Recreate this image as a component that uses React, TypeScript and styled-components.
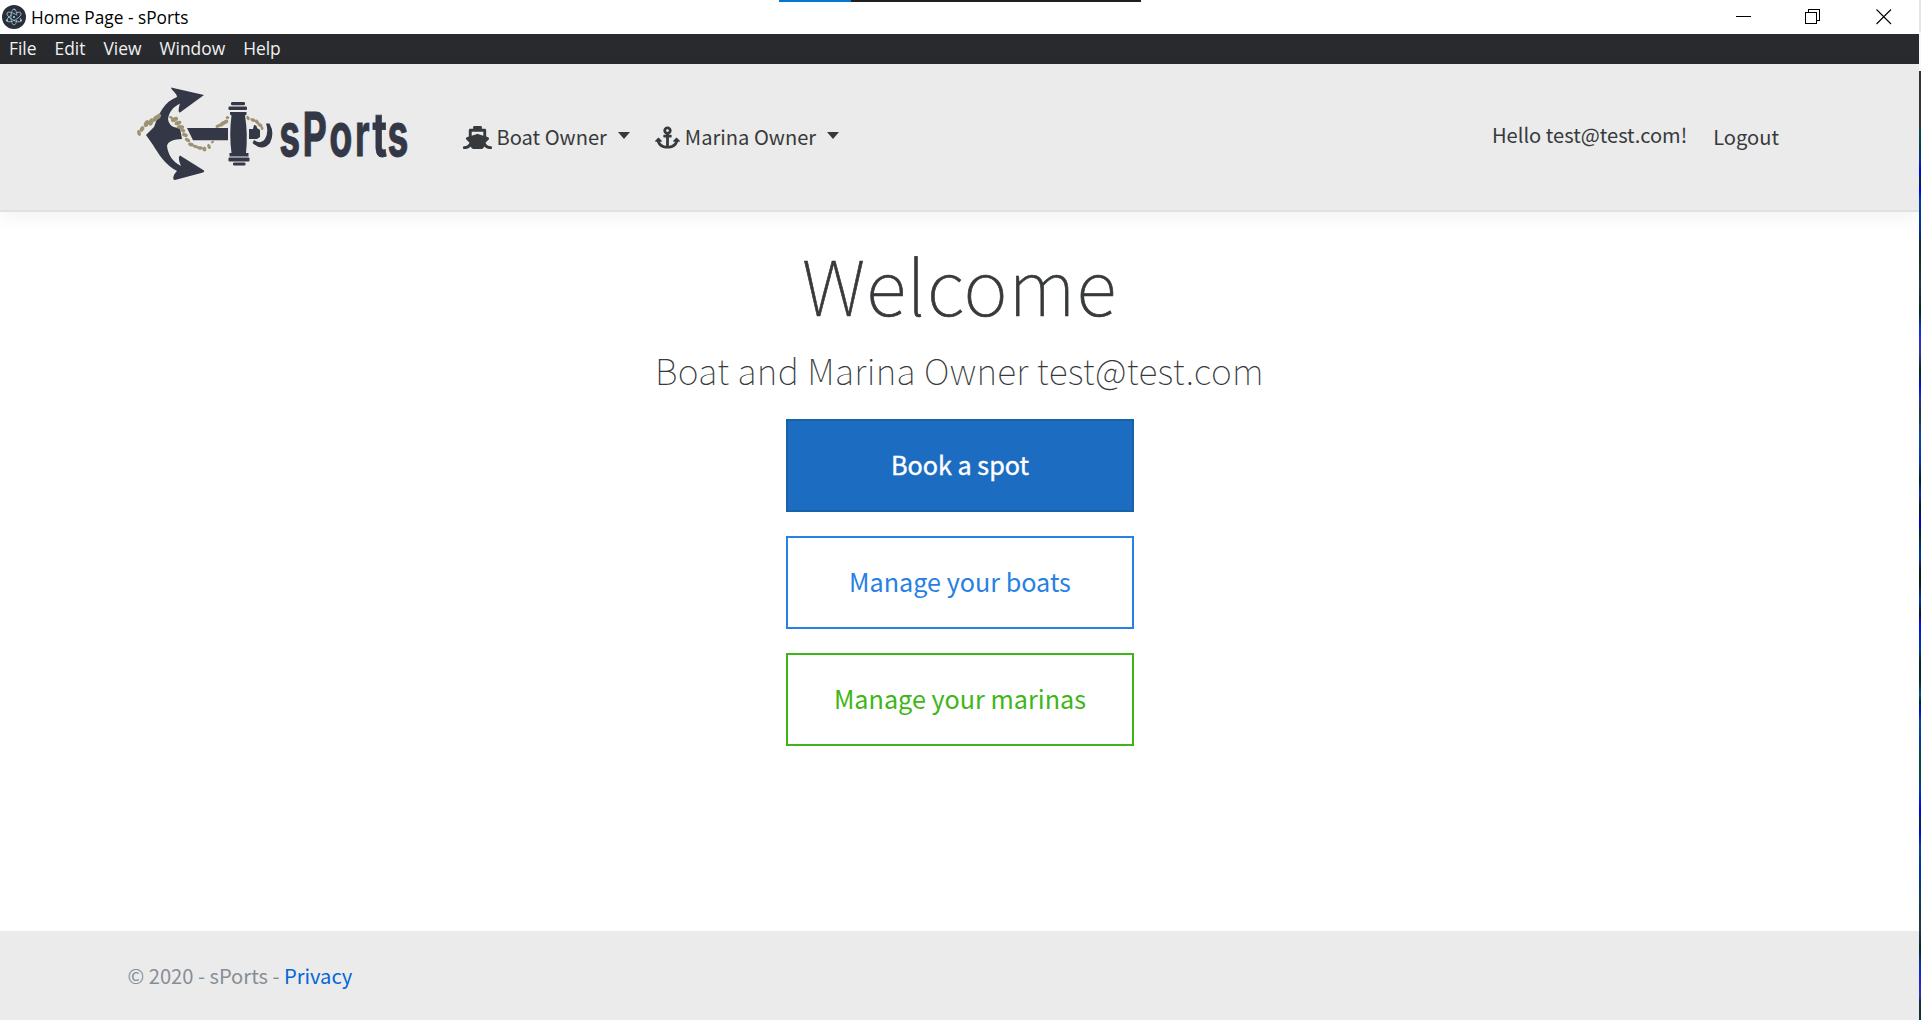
import React from "react";
import styled, { createGlobalStyle } from "styled-components";
import { FaShip, FaAnchor } from "react-icons/fa";

const sans = '"Noto Sans CJK JP", "Noto Sans", sans-serif';

const Global = createGlobalStyle`
  * { box-sizing: border-box; }
  body { margin: 0; background: #fff; color: #373a3c; font-family: ${sans}; overflow: hidden; }
`;
const Desktop = styled.div`
  display: grid;
  grid-template-columns: 1fr 2px;
  height: 1020px;
  width: 1921px;
`;
const DesktopEdge = styled.div`
  background: linear-gradient(#e6e6e6 0 32px, #f8f8f8 32px 71px, #30343c 71px 126px, #054a52 130px, #04404c 146px, #0030a8 160px, #0000f0 173px, #003038 180px, #0000f0 190px, #0040a0 202px, #0030a0 232px, #062c30 246px, #1a3030 264px, #1a3a60 286px, #042828 312px, #0038c0 326px, #2a2ae0 338px, #2838a0 354px, #082828 370px, #0010e0 386px, #2030b0 398px, #203838 414px, #1048a0 434px, #0038b0 462px, #042020 480px, #0030c0 494px, #042020 506px, #0000e0 523px, #042828 535px, #0038b0 555px, #041c20 572px, #041c20 582px, #0038b0 600px, #041c20 613px, #0010f0 623px, #0038a0 650px, #042828 662px, #042828 680px, #005090 695px, #042828 702px, #0010f0 712px, #005088 722px, #0038b0 740px, #044850 755px, #044850 775px, #0038b0 790px, #0000f0 812px, #003040 822px, #0000f0 832px, #004890 848px, #0030b0 870px, #0a4060 900px, #1a3838 915px, #1a3a60 928px, #042828 950px, #0038b0 965px, #2020e0 976px, #2038b0 996px, #12303c 1002px);
`;
const Window = styled.div`
  display: flex;
  flex-direction: column;
  min-width: 0;
`;
const TitleBar = styled.header`
  position: relative;
  display: flex;
  align-items: center;
  height: 34px;
  padding-left: 2px;
  background: #fff;
  color: #000;
`;
const TitleText = styled.span`
  margin-left: 5px;
  padding-top: 2px;
  flex: 1;
  font: 400 17.3px/32px "Open Sans", sans-serif;
`;
const LoadStrip = styled.div`
  position: absolute;
  left: 779px;
  top: 0;
  width: 362px;
  height: 2px;
  background: linear-gradient(90deg, #0078d7 72px, #1f1f1f 72px);
`;
const WindowControls = styled.div`
  display: flex;
  gap: 54px;
  padding-right: 27px;
`;
const MenuBar = styled.nav`
  display: flex;
  height: 30px;
  padding-left: 9px;
  gap: 18px;
  background: #292a2d;
  color: #f1f1f1;
  font: 400 17.4px/29px "Open Sans", sans-serif;
`;
const NavBar = styled.nav`
  display: flex;
  align-items: center;
  height: 148px;
  flex: none;
  padding: 0 140px 0 120px;
  background: #ebebeb;
  border-bottom: 2px solid #dee2e6;
  box-shadow: 0 6px 18px rgba(0, 0, 0, 0.05);
  font-size: 20.1px;
  line-height: 30px;
`;
const NavItem = styled.a<{ $gap: number }>`
  display: flex;
  align-items: center;
  margin-left: ${(p) => p.$gap}px;
  white-space: nowrap;
`;
const NavLabel = styled.span`
  margin-left: 4.5px;
`;
const Caret = styled.i`
  margin: -4px 0 0 11px;
  border: 6.5px solid transparent;
  border-top: 7px solid #373a3c;
  border-bottom: 0;
`;
const Account = styled.div`
  display: flex;
  gap: 26px;
  margin-left: auto;
`;
const Greeting = styled.span`
  margin-top: -2px;
`;
const Main = styled.main`
  flex: 1;
  display: flex;
  flex-direction: column;
  align-items: center;
  padding-top: 21px;
`;
const Heading = styled.h1`
  margin: 0;
  font-size: 75.2px;
  font-weight: 100;
  line-height: 101px;
  letter-spacing: 1px;
  -webkit-text-stroke: 0.7px #373a3c;
`;
const SubHeading = styled.h2`
  margin: 11px 0 24px;
  font-size: 35.5px;
  font-weight: 100;
  line-height: 50px;
  letter-spacing: 0.32px;
`;
const Actions = styled.div`
  display: flex;
  flex-direction: column;
  gap: 24px;
`;
const Action = styled.button<{ $text: string; $line: string; $fill?: string }>`
  width: 348px;
  height: 93px;
  padding: 0 0 4px 1px;
  border: 2px solid ${(p) => p.$line};
  background: ${(p) => p.$fill ?? "#fff"};
  color: ${(p) => p.$text};
  font: 400 25.2px/38px ${sans};
  -webkit-text-stroke: ${(p) => (p.$fill ? "0.4px" : "0")} ${(p) => p.$text};
`;
const Footer = styled.footer`
  height: 89px;
  padding-left: 127.5px;
  background: #ebebeb;
  color: #868e96;
  font-size: 20.15px;
  line-height: 90px;
`;
const PrivacyLink = styled.a`
  color: #0366d6;
`;
const LogoArt = styled.svg`
  flex: none;
  margin-top: 4px;
`;

const ElectronIcon = () => (
  <svg width="24" height="24" viewBox="0 0 24 24">
    <circle cx="12" cy="12" r="12" fill="#2b2e3a" />
    <g fill="none" stroke="#a9dbe4" strokeWidth="0.85" opacity="0.85">
      <ellipse cx="12" cy="12" rx="8" ry="3.1" transform="rotate(30 12 12)" strokeDasharray="29 4" />
      <ellipse cx="12" cy="12" rx="8" ry="3.1" transform="rotate(-30 12 12)" strokeDasharray="27 5" />
      <ellipse cx="12" cy="12" rx="8" ry="3.1" transform="rotate(90 12 12)" strokeDasharray="25 5" />
    </g>
    <g fill="#a9dbe4">
      <circle cx="12" cy="12" r="1" />
      <circle cx="5" cy="15.5" r="1" />
      <circle cx="19" cy="15.5" r="1" />
      <circle cx="12.5" cy="4.5" r="0.8" />
    </g>
  </svg>
);

/* Rope beads: x, y, half length, half width, rotation */
const beads = [
  [19, 64, 3, 1.8, 75], [22, 60, 3, 2, -60], [26.5, 54.5, 3.7, 2.4, -65], [31, 53, 3.7, 2.4, -70], [35.5, 49.5, 3.5, 2.3, -50], [38.5, 47.5, 3.2, 2.2, -60],
  [51, 48.5, 2, 1.2, 20], [54.5, 50.5, 3.8, 2.2, -25], [58, 54, 3.5, 2, -20], [60.5, 58, 3.6, 2, 0], [63, 61.5, 2.4, 1.8, 40], [65, 66, 3, 1.9, 20],
  [67.5, 71, 3, 1.8, 30], [71, 75.5, 3, 1.8, 20], [75.5, 77.5, 2.7, 1.6, 10], [80, 79, 3, 1.7, 10], [84.5, 80, 2.6, 1.9, 90], [89, 77.5, 2.6, 1.7, 70], [92.5, 73, 1.7, 1.2, -45],
  [98, 57, 2.6, 1.7, -20], [102, 55, 3.3, 2, -40], [105.5, 53, 3.2, 1.9, -30], [107.5, 48.5, 1.7, 1.5, 0],
  [128, 49, 2.4, 1.5, 60], [133, 51, 2.7, 1.7, 30], [137, 53, 2.7, 1.7, 50], [140, 56, 2.6, 1.7, 30], [142, 59, 2, 1.4, 70],
];
const wordmark: [string, number, number][] = [
  ["s", 159.3, 0.62], ["P", 182.5, 0.63], ["o", 209.2, 0.63], ["r", 235, 0.6], ["t", 252.5, 0.66], ["s", 267.5, 0.62],
];

const Logo = () => (
  <LogoArt width="300" height="140" viewBox="0 0 300 140">
    <g fill="#343746">
      <path d="M51 18.5 L84 26 L60 43.5 C58 44 58.5 39 60 34.5 C53 38 49 43 48 50 C49 57 54 59 60 59 L62 70 C54 70.5 48 72 47 77 C48 86 53 93 61 97 C59 92 58 88 60 86.5 L84 101.5 C84.5 102 84 103 83 103.5 L55 111 C52 111 53 106 57 102 C45 96 38 84 33 76 L26 66 L34 58 C39 44 44 33 57 28 C57 24 51 21 51 18.5 Z" />
      <path d="M67 59 H108 V71.3 H73 Z" />
      <rect x="111" y="33" width="14" height="3.3" rx="1.3" />
      <rect x="108.5" y="37.5" width="18.5" height="3.5" rx="1" />
      <path d="M110 43 H126.5 V45.5 L125 46.5 Q128 65 126 84 H128.5 V87.5 H109.5 V84 H111.5 Q109 65 111.5 46.5 L110 45.5 Z" />
      <rect x="108.5" y="88.5" width="21" height="4" rx="1" />
      <rect x="113" y="93.5" width="12.5" height="3" rx="1.2" />
      <path d="M129 60 L133 60 L134 56 Q137 56 137 59 L140 61 V68 L137 70 H129 Z" />
      <path d="M146 54.5 H149.5 Q155 64 150 74 Q142 83 132.500 74 L134 71 Q141 76 145 70 Q149 63 146 54.5 Z" />
    </g>
    <g fill="#9d9272">
      {beads.map(([x, y, rx, ry, r], i) => (
        <ellipse key={i} cx={x} cy={y} rx={rx} ry={ry} transform={`rotate(${r} ${x} ${y})`} />
      ))}
    </g>
    <g fill="#343746" stroke="#343746" strokeWidth="0.8" fontFamily="Inter, sans-serif" fontWeight="700" fontSize="60">
      {wordmark.map(([letter, x, stretch], i) => (
        <text key={i} transform={`translate(${x} 86.5) scale(${stretch} 1)`}>{letter}</text>
      ))}
    </g>
  </LogoArt>
);

export default function App() {
  return (
    <Desktop>
      <Global />
      <Window>
        <TitleBar>
          <ElectronIcon />
          <TitleText>Home Page - sPorts</TitleText>
          <LoadStrip />
          <WindowControls>
            <svg width="16" height="16" shapeRendering="crispEdges"><path d="M1 7.5H16" stroke="#000" /></svg>
            <svg width="17" height="16" shapeRendering="crispEdges"><path d="M.5 3.5H11.5V14.5H.5ZM3.5 3.5V.5H14.5V11.5H11.5" fill="none" stroke="#000" /></svg>
            <svg width="16" height="16"><path d="M.5 .5L15 15M15 .5L.5 15" stroke="#000" strokeWidth="1.1" /></svg>
          </WindowControls>
        </TitleBar>
        <MenuBar>
          {["File", "Edit", "View", "Window", "Help"].map((m) => <span key={m}>{m}</span>)}
        </MenuBar>
        <NavBar>
          <Logo />
          <NavItem $gap={43}><FaShip size={29} /><NavLabel>Boat Owner</NavLabel><Caret /></NavItem>
          <NavItem $gap={25.5}><FaAnchor size={25} /><NavLabel>Marina Owner</NavLabel><Caret /></NavItem>
          <Account><Greeting>Hello test@test.com!</Greeting><span>Logout</span></Account>
        </NavBar>
        <Main>
          <Heading>Welcome</Heading>
          <SubHeading>Boat and Marina Owner test@test.com</SubHeading>
          <Actions>
            <Action $text="#fff" $line="#1862ab" $fill="#1c6dc1">Book a spot</Action>
            <Action $text="#2780e3" $line="#2780e3">Manage your boats</Action>
            <Action $text="#3fb618" $line="#3fb618">Manage your marinas</Action>
          </Actions>
        </Main>
        <Footer>© 2020 - sPorts - <PrivacyLink>Privacy</PrivacyLink></Footer>
      </Window>
      <DesktopEdge />
    </Desktop>
  );
}
